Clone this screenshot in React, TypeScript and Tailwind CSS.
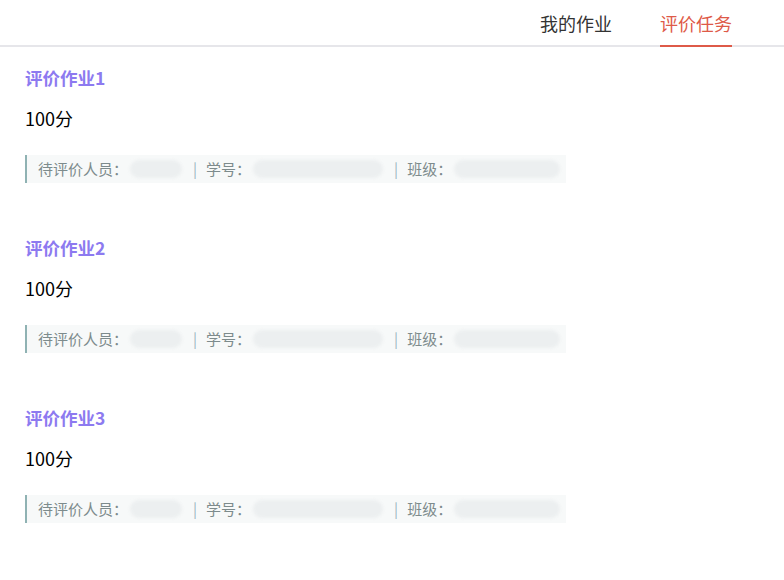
import { useState } from "react";

const tabs = ["我的作业", "评价任务"];

const tasks = [
  { id: 1, title: "评价作业1", score: 100, blobs: [56, 134, 110] },
  { id: 2, title: "评价作业2", score: 100, blobs: [56, 134, 110] },
  { id: 3, title: "评价作业3", score: 100, blobs: [56, 134, 110] },
];

// masked value: a soft grey smudge in place of the personal data
const Masked = ({ width }: { width: number }) => (
  <span className="relative inline-block h-[18px]" style={{ width }}>
    <span className="absolute inset-x-[2px] inset-y-0 rounded-full bg-[#eceff0] blur-[1.5px]" />
  </span>
);

const TaskCard = ({ title, score, blobs }: { title: string; score: number; blobs: number[] }) => (
  <div className="px-[25px] pt-[19px] pb-[34px]">
    <h2 className="text-[17.5px] leading-[24px] font-bold text-[#8d7af0]">{title}</h2>
    <p className="mt-[16px] text-[18px] leading-[24px] text-black">{score}分</p>
    <div className="mt-[25px] inline-flex h-[28px] items-center border-l-2 border-[#8fb2b3] bg-[#f7f9f9] pl-[11px] pr-[4px] text-[15px] text-[#7d8b8c]">
      <span>待评价人员：</span>
      <Masked width={blobs[0]} />
      <span className="mx-[9px] text-[#9db7c0]">|</span>
      <span>学号：</span>
      <Masked width={blobs[1]} />
      <span className="mx-[9px] text-[#9db7c0]">|</span>
      <span>班级：</span>
      <Masked width={blobs[2]} />
    </div>
  </div>
);

const App = () => {
  const [active, setActive] = useState(1);

  return (
    <div
      className="min-h-[580px] w-[784px] bg-white"
      style={{ fontFamily: '"Noto Sans CJK SC", "Noto Sans", sans-serif' }}
    >
      <div className="flex h-[47px] justify-end border-b-2 border-[#e6e6ea] pr-[28px]">
        {tabs.map((t, i) => (
          <button
            key={t}
            onClick={() => setActive(i)}
            className={`-mb-[2px] mx-[24px] border-b-2 text-[18px] leading-[44px] ${
              active === i ? "border-[#de5a48] text-[#de5a48]" : "border-transparent text-[#333]"
            }`}
          >
            {t}
          </button>
        ))}
      </div>
      {tasks.map((t) => (
        <TaskCard key={t.id} title={t.title} score={t.score} blobs={t.blobs} />
      ))}
    </div>
  );
};

export default App;
